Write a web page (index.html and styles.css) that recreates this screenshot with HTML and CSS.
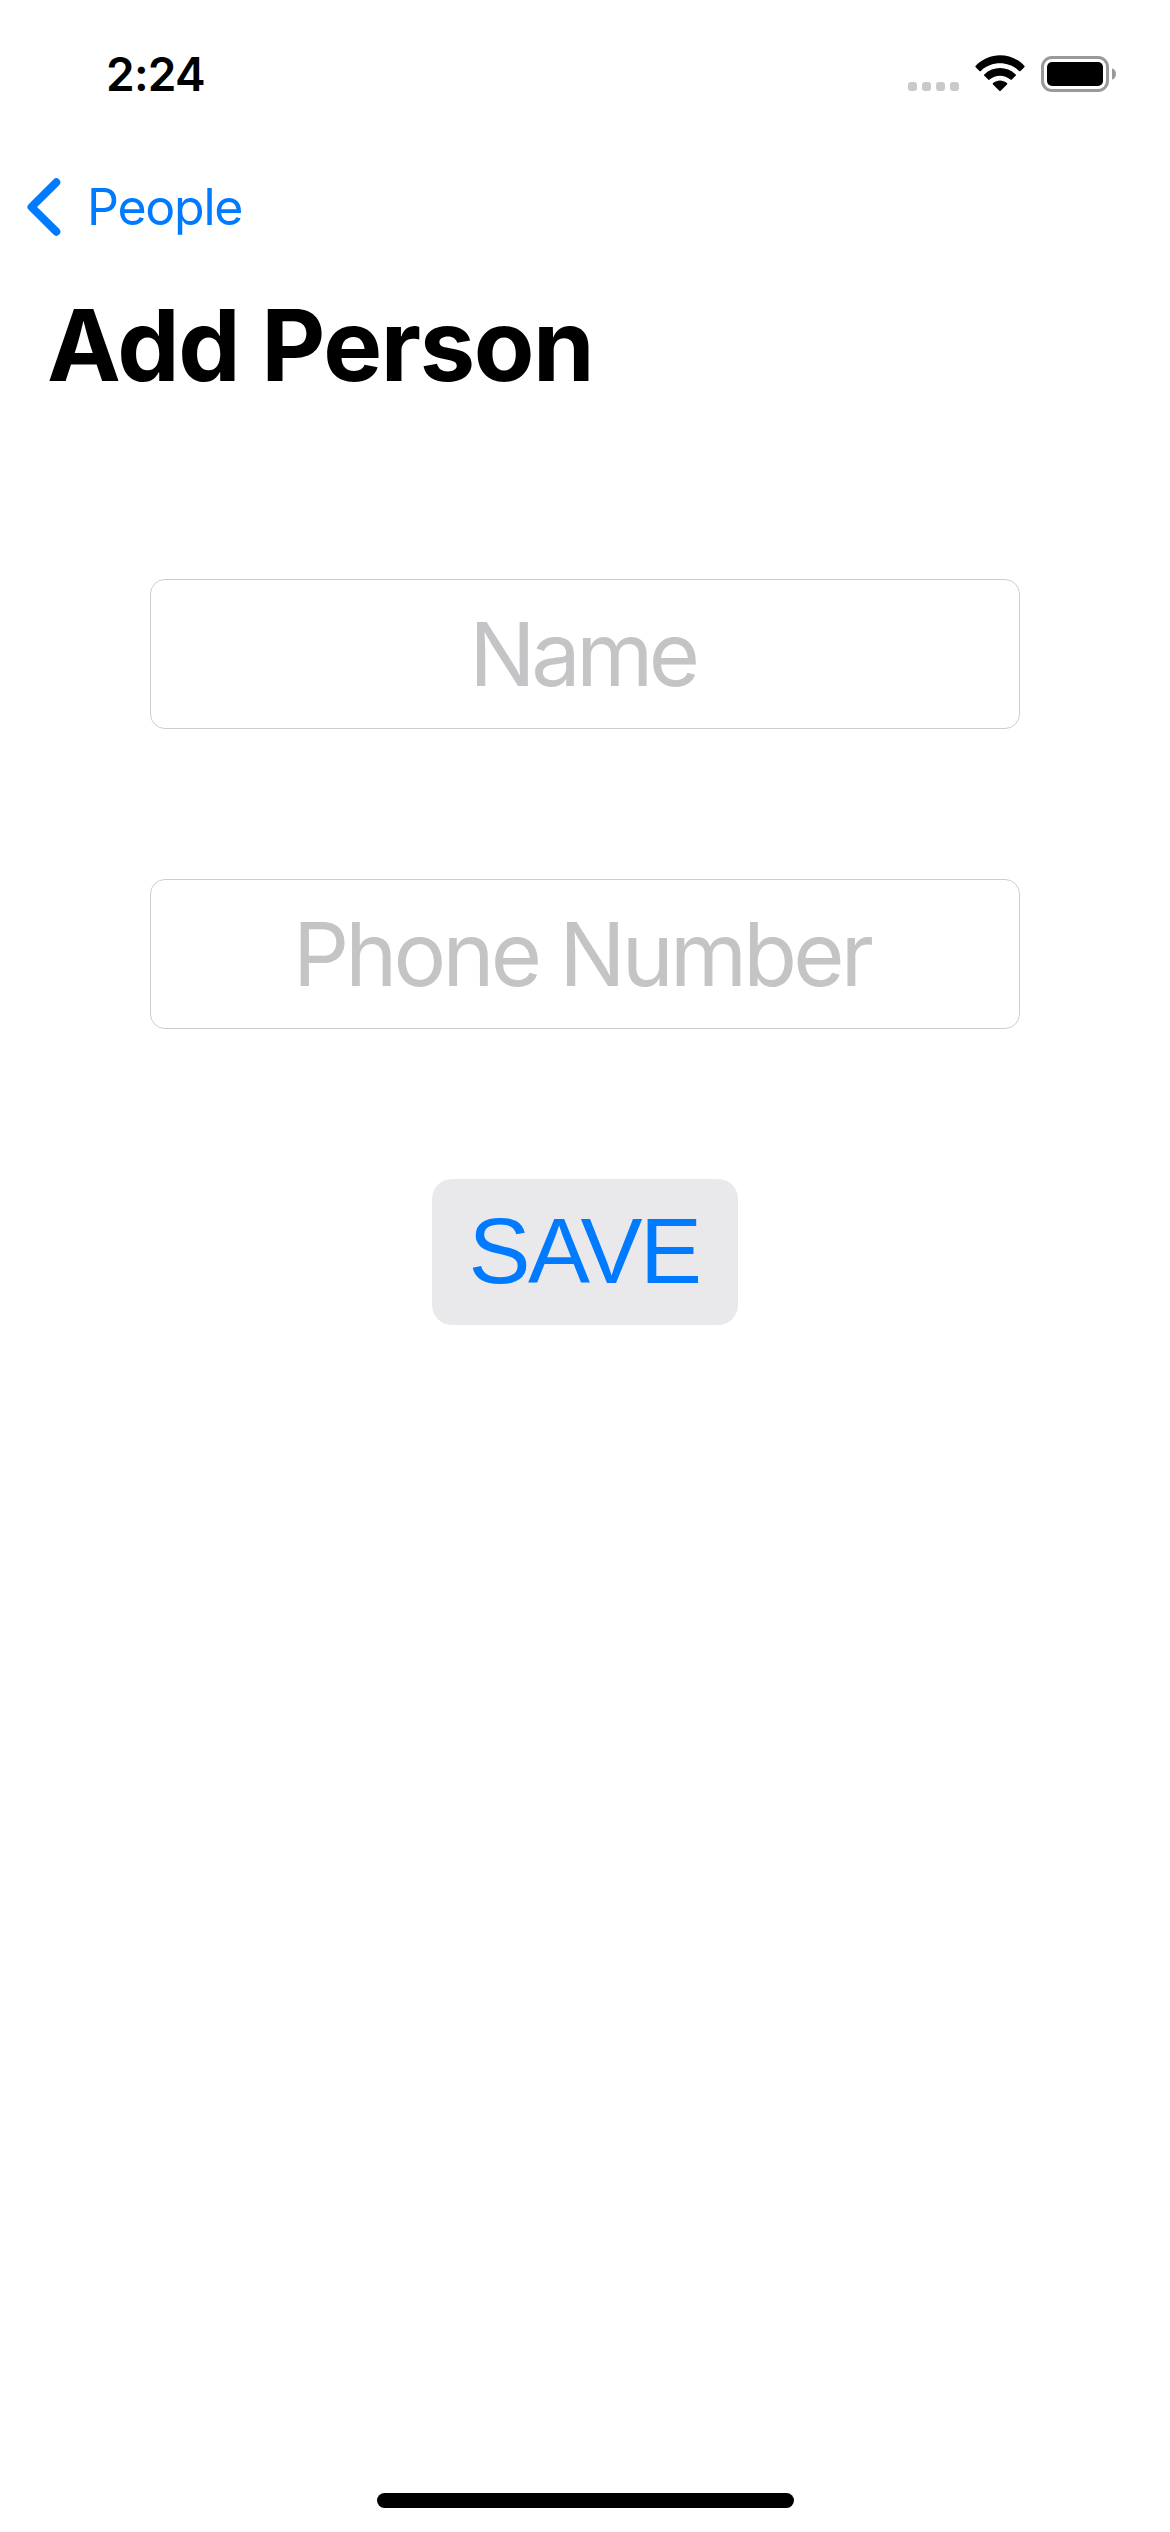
FILE: index.html
```html
<!DOCTYPE html>
<html lang="en">
<head>
<meta charset="utf-8">
<title>Add Person</title>
<link rel="stylesheet" href="styles.css">
</head>
<body>
<div class="screen">
  <header class="status-bar">
    <span class="time">2:24</span>
    <div class="indicators">
      <div class="signal"><i></i><i></i><i></i><i></i></div>
      <svg class="wifi" width="50" height="37" viewBox="0 0 50 37">
        <path d="M.7 12.2Q0 11.5.7 10.8C14-3.3 36-3.3 49.3 10.8Q50 11.5 49.3 12.2L45.5 16Q44.8 16.7 44.1 16C33.6 5.8 16.4 5.8 5.9 16Q5.2 16.7 4.5 16Z"/>
        <path d="M9.3 20.8Q8.6 20.1 9.3 19.4C18.2 11 31.8 11 40.7 19.4Q41.4 20.1 40.7 20.8L36.8 24.6Q36.1 25.3 35.4 24.6C29.5 19.3 20.5 19.3 14.6 24.6Q13.9 25.3 13.2 24.6Z"/>
        <path d="M18 29.4Q17.3 28.7 18 28.1C22 24.7 28 24.7 32 28.1Q32.7 28.7 32 29.4L25.7 35.7Q25 36.4 24.3 35.7Z"/>
      </svg>
      <svg class="battery" width="75" height="36" viewBox="0 0 75 36">
        <rect x="1.5" y="1.5" width="65" height="33" rx="9.5" fill="none" stroke="#999" stroke-width="3"/>
        <rect x="6" y="6" width="56" height="24" rx="5"/>
        <path d="M71 12.2C76.3 14 76.3 22 71 23.8Z" fill="#999"/>
      </svg>
    </div>
  </header>
  <nav class="nav-bar">
    <a class="back" href="#">
      <svg width="34" height="58" viewBox="0 0 34 58"><path d="M29.3 4.3L4.5 29L29.3 53.7"/></svg>
      <span class="back-label">People</span>
    </a>
  </nav>
  <h1 class="title">Add Person</h1>
  <form class="form">
    <input class="field name" type="text" placeholder="Name">
    <input class="field phone" type="tel" placeholder="Phone Number">
    <button class="save" type="button">SAVE</button>
  </form>
  <div class="home-indicator"></div>
</div>
</body>
</html>
```
FILE: styles.css
```css
* { box-sizing: border-box; }

body {
  margin: 0;
  background: #fff;
  color: #000;
  font-family: Inter, "Liberation Sans", sans-serif;
}

.screen {
  display: flex;
  flex-direction: column;
  width: 1170px;
  height: 2532px;
  padding-bottom: 24px;
  overflow: hidden;
}

.status-bar {
  display: flex;
  justify-content: space-between;
  height: 141px;
  padding: 44px 54px 0 106px;
}

.time {
  font-size: 46px;
  font-weight: 600;
  line-height: 60px;
  letter-spacing: -0.75px;
}

.indicators {
  display: flex;
  align-items: flex-start;
  padding-top: 11px;
}

.signal {
  display: flex;
  gap: 5px;
  margin: 27px 16px 0 0;
}

.signal i {
  width: 9px;
  height: 9px;
  border-radius: 3px;
  background: #c9c9c9;
}

.wifi { margin-right: 16px; }
.battery { margin-top: 1px; }

.nav-bar {
  display: flex;
  align-items: center;
  height: 132px;
  padding: 0 0 1px 27px;
}

.back {
  display: flex;
  align-items: center;
  gap: 26px;
  color: #007aff;
  text-decoration: none;
}

.back path {
  fill: none;
  stroke: #007aff;
  stroke-width: 8;
  stroke-linecap: round;
  stroke-linejoin: round;
}

.back-label {
  font-size: 50px;
  line-height: 60px;
  letter-spacing: -1.25px;
}

.title {
  height: 156px;
  margin: 0;
  padding: 12px 0 0 47px;
  font-size: 99px;
  font-weight: 700;
  line-height: 120px;
  letter-spacing: -1.4px;
}

.form {
  display: flex;
  flex-direction: column;
  align-items: center;
  gap: 150px;
  padding-top: 150px;
}

.field {
  width: 870px;
  height: 150px;
  margin: 0;
  border: 1px solid #cdcdce;
  border-radius: 15px;
  outline: 0;
  background: #fff;
  font: 400 88px Inter, "Liberation Sans", sans-serif;
  text-align: center;
}

.field::placeholder {
  color: #c4c4c6;
  opacity: 1;
}

.name {
  padding: 0 5px 0 0;
  letter-spacing: -4.4px;
}

.phone {
  padding: 0 7px 0 0;
  letter-spacing: -3.8px;
}

.save {
  width: 306px;
  height: 146px;
  margin: 0;
  padding: 0 2px 2px 0;
  border: 0;
  border-radius: 20px;
  background: #e9e9eb;
  color: #007aff;
  font: 400 93px "Liberation Sans", Arial, sans-serif;
  letter-spacing: -2.5px;
}

.home-indicator {
  width: 417px;
  height: 15px;
  margin: auto auto 0 377px;
  border-radius: 8px;
  background: #000;
}
```
